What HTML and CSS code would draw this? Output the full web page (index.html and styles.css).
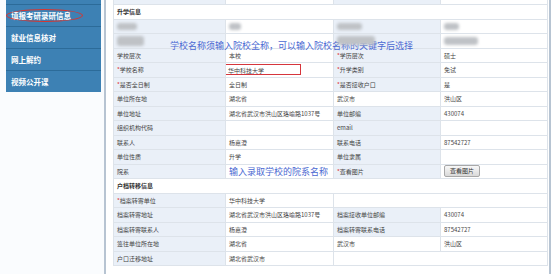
FILE: index.html
```html
<!DOCTYPE html>
<html lang="zh-CN">
<head>
    <meta charset="UTF-8">
    <title>填报考研录研信息</title>
    <link rel="stylesheet" href="styles.css">
</head>
<body>
    <aside class="sidebar">
        <nav class="menu">
            <a class="menu-item cut" href="#"></a>
            <a class="menu-item current" href="#">填报考研录研信息<span class="ring"></span></a>
            <a class="menu-item" href="#">就业信息核对</a>
            <a class="menu-item" href="#">网上解约</a>
            <a class="menu-item" href="#">视频公开课</a>
        </nav>
    </aside>

    <main class="content">
        <div class="panel">
            <p class="tip tip-school">学校名称须输入院校全称，可以输入院校名称的关键字后选择</p>
            <table class="info">
                <colgroup>
                    <col class="c1"><col class="c2"><col class="c3"><col class="c4">
                </colgroup>
                <tr><td class="label"></td><td></td><td class="label"></td><td></td></tr>
                <tr><th colspan="4">升学信息</th></tr>
                <tr>
                    <td class="label"><span class="blur b1"></span></td>
                    <td><span class="blur b2"></span></td>
                    <td class="label"><span class="blur b3"></span></td>
                    <td><span class="blur b4"></span></td>
                </tr>
                <tr>
                    <td class="label"><span class="blur b5"></span></td>
                    <td></td>
                    <td class="label"><span class="blur b6"></span></td>
                    <td><span class="blur b7"></span></td>
                </tr>
                <tr><td class="label">学校层次</td><td>本校</td><td class="label"><i>*</i>学历层次</td><td>硕士</td></tr>
                <tr><td class="label"><i>*</i>学校名称</td><td><span class="input">华中科技大学</span></td><td class="label"><i>*</i>升学类别</td><td>免试</td></tr>
                <tr><td class="label"><i>*</i>是否全日制</td><td>全日制</td><td class="label"><i>*</i>是否接收户口</td><td>是</td></tr>
                <tr><td class="label">单位所在地</td><td>湖北省</td><td>武汉市</td><td>洪山区</td></tr>
                <tr><td class="label">单位地址</td><td>湖北省武汉市洪山区珞喻路1037号</td><td class="label">单位邮编</td><td>430074</td></tr>
                <tr><td class="label">组织机构代码</td><td></td><td class="label">email</td><td></td></tr>
                <tr><td class="label">联系人</td><td>杨嘉澄</td><td class="label">联系电话</td><td>87542727</td></tr>
                <tr><td class="label">单位性质</td><td>升学</td><td class="label">单位隶属</td><td></td></tr>
                <tr><td class="label">院系</td><td><span class="tip">输入录取学校的院系名称</span></td><td class="label"><i>*</i>查看图片</td><td><button class="btn" type="button">查看图片</button></td></tr>
                <tr><th colspan="4">户档转移信息</th></tr>
                <tr><td class="label"><i>*</i>档案转寄单位</td><td>华中科技大学</td><td colspan="2"></td></tr>
                <tr><td class="label">档案转寄地址</td><td>湖北省武汉市洪山区珞喻路1037号</td><td class="label">档案接收单位邮编</td><td>430074</td></tr>
                <tr><td class="label">档案转寄联系人</td><td>杨嘉澄</td><td class="label">档案转寄联系电话</td><td>87542727</td></tr>
                <tr><td class="label">签往单位所在地</td><td>湖北省</td><td>武汉市</td><td>洪山区</td></tr>
                <tr><td class="label">户口迁移地址</td><td>湖北省武汉市</td><td colspan="2"></td></tr>
            </table>
        </div>
    </main>
</body>
</html>
```

FILE: styles.css
```css
body {
    margin: 0;
    display: flex;
    height: 274px;
    overflow: hidden;
    background-color: #fff;
    font-family: "Noto Sans CJK SC", "Noto Sans", sans-serif;
    color: #444;
}
.sidebar {
    box-sizing: border-box;
    width: 106px;
    flex: none;
    background-color: #fafcfe;
    border-right: 2px solid #b7c4d2;
}
.menu {
    margin-left: 6px;
    width: 95px;
    background-color: #3d81b4;
}
.menu-item {
    position: relative;
    display: block;
    height: 21px;
    line-height: 21px;
    padding-left: 5px;
    border-top: 1px solid #2c6b99;
    color: #fff;
    font-size: 7.5px;
    font-weight: bold;
    text-decoration: none;
    white-space: nowrap;
}
.menu-item.cut {
    height: 4px;
    border-top: none;
}
.ring {
    position: absolute;
    left: 0;
    top: 4px;
    width: 75px;
    height: 11px;
    border: 1.5px solid #d8352f;
    border-radius: 50%;
}
.content {
    flex: 1;
    overflow: hidden;
}
.panel {
    position: relative;
    box-sizing: border-box;
    width: 445px;
    height: 274px;
    padding: 0 2px 0 7px;
    border-right: 2px solid #b7c4d2;
    overflow: hidden;
}
.info {
    width: 434px;
    margin-top: -10.5px;
    border-collapse: collapse;
    table-layout: fixed;
    font-size: 6px;
}
.c1 { width: 112px; }
.c2 { width: 108px; }
.c3 { width: 107px; }
.c4 { width: 107px; }
.info td,
.info th {
    height: 14.5px;
    padding: 0 3px;
    border: 1px solid #dde3ea;
    white-space: nowrap;
    overflow: hidden;
    text-align: left;
    box-sizing: border-box;
}
.info th {
    font-weight: bold;
    color: #333;
}
.info .label {
    background-color: #eaf0f8;
}
.info i {
    font-style: normal;
    color: #d33;
}
.blur {
    display: block;
    height: 7px;
    background-color: #bfc2c6;
    border-radius: 3px;
    filter: blur(1.5px);
}
.b1 { width: 20px; }
.b2 { width: 12px; }
.b3 { width: 25px; }
.b4 { width: 15px; }
.b5 { width: 27px; height: 10px; }
.b6 { width: 38px; height: 9px; }
.b7 { width: 34px; height: 8px; }
.input {
    display: block;
    width: 78px;
    height: 11px;
    line-height: 11px;
    margin-left: -6px;
    padding-left: 4px;
    box-sizing: border-box;
    border: 1.5px solid #d6353c;
}
.tip {
    color: #4a68d2;
    font-size: 9px;
}
.tip-school {
    position: absolute;
    left: 64px;
    top: 40px;
    margin: 0;
    line-height: 12px;
}
.btn {
    height: 12px;
    padding: 0 5px;
    font-family: inherit;
    font-size: 6px;
    line-height: 10px;
    color: #333;
    border: 1px solid #a8a8a8;
    border-radius: 2px;
    background: linear-gradient(#f8f8f8, #d9d9d9);
}
```
